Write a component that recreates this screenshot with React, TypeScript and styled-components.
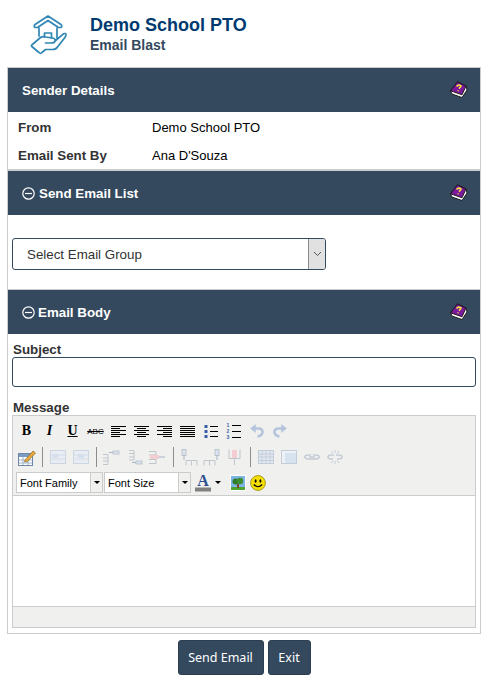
import React from "react"
import styled, { createGlobalStyle } from "styled-components"

const dark = "#34495e"
const line = "#cccccc"

const GlobalStyle = createGlobalStyle`
    html, body {
        margin: 0;
        padding: 0;
        background: #fff;
        font-family: "Liberation Sans", Arial, sans-serif;
    }
`

const Page = styled.div`
    width: 488px;
    height: 689px;
    overflow: hidden;
`

const Brand = styled.header`
    height: 67px;
    display: flex;
    align-items: flex-start;
    padding-left: 30px;
`

const LogoSvg = styled.svg`
    width: 37px;
    height: 42px;
    margin-top: 14px;
    flex: none;
`

const BrandText = styled.div`
    margin-left: 23px;
    padding-top: 15px;
`

const BrandTitle = styled.h1`
    margin: 0;
    font-size: 18px;
    line-height: 20px;
    font-weight: 700;
    color: #003a70;
`

const BrandSub = styled.h2`
    margin: 0;
    font-size: 14px;
    line-height: 20px;
    font-weight: 700;
    color: #34495e;
`

const Frame = styled.main`
    margin-left: 7px;
    width: 474px;
    height: 567px;
    box-sizing: border-box;
    border: 1px solid ${line};
`

const PanelBar = styled.div`
    height: 44px;
    box-sizing: border-box;
    background: ${dark};
    color: #fff;
    display: flex;
    align-items: center;
    padding: 0 12px 0 14px;
    font-size: 13.33px;
    font-weight: 700;
`

const BarTitle = styled.span`
    flex: 1;
    margin-left: ${p => p.$gap ?? 0}px;
`

const Details = styled.div`
    height: 57px;
    padding: 1px 0 0 10px;
    box-sizing: border-box;
`

const DetailRow = styled.div`
    display: flex;
    height: 28px;
    align-items: center;
    font-size: 13px;
    color: #000;
`

const DetailLabel = styled.span`
    width: 134px;
    font-size: 13.33px;
    font-weight: 700;
    color: #333;
`

const Divider = styled.div`
    height: ${p => p.$h ?? 2}px;
    background: ${line};
`

const ListBody = styled.div`
    height: 74px;
    box-sizing: border-box;
    padding: 23px 0 0 4px;
`

const SelectBox = styled.div`
    width: 314px;
    height: 32px;
    box-sizing: border-box;
    border: 1px solid ${dark};
    border-radius: 3px;
    display: flex;
    align-items: center;
    font-size: 13.33px;
    color: #333;
    padding-left: 14px;
    overflow: hidden;
`

const SelectText = styled.span`
    flex: 1;
`

const SelectArrow = styled.span`
    width: 17px;
    height: 30px;
    box-sizing: border-box;
    background: #e1e1e1;
    border-left: 1px solid #8a8a8a;
    display: flex;
    align-items: center;
    justify-content: center;
`

const BodyArea = styled.div`
    padding: 8px 4px 0;
`

const FieldLabel = styled.label`
    display: block;
    font-size: 13.33px;
    line-height: 15px;
    font-weight: 700;
    color: #333;
    padding-left: 1px;
    margin-top: ${p => p.$top ?? 0}px;
`

const TextInput = styled.div`
    height: 30px;
    box-sizing: border-box;
    border: 1px solid ${dark};
    border-radius: 3px;
`

const Editor = styled.div`
    height: 213px;
    box-sizing: border-box;
    border: 1px solid ${line};
    display: flex;
    flex-direction: column;
`

const Toolbar = styled.div`
    height: 80px;
    box-sizing: border-box;
    background: #f0f0ee;
    border-bottom: 1px solid ${line};
    padding: 2px 0 0 2px;
`

const ToolRow = styled.div`
    height: ${p => p.$h ?? 26}px;
    display: flex;
    align-items: center;
`

const ToolButton = styled.span`
    width: ${p => p.$w ?? 23}px;
    height: 20px;
    flex: none;
    display: flex;
    align-items: center;
    justify-content: center;
    font-family: "Liberation Serif", serif;
    font-weight: 700;
    font-size: 14px;
    font-style: ${p => (p.$italic ? "italic" : "normal")};
    text-decoration: ${p => (p.$under ? "underline" : "none")};
    color: #000;
`

const StrikeText = styled.span`
    font-size: 8px;
    font-family: "Liberation Sans", sans-serif;
    font-weight: 400;
    text-decoration: line-through;
`

const ToolSep = styled.span`
    width: 8px;
    height: 20px;
    flex: none;
    display: flex;
    justify-content: center;
    &::before {
        content: "";
        width: 1px;
        background: #8c8c8c;
    }
`

const ListBoxWrap = styled.span`
    width: ${p => p.$w}px;
    height: 21px;
    margin-left: ${p => p.$left ?? 0}px;
    flex: none;
    box-sizing: border-box;
    border: 1px solid ${line};
    background: #fff;
    display: flex;
    align-items: center;
    font-size: 11px;
    color: #000;
    padding-left: 3px;
`

const ListBoxText = styled.span`
    flex: 1;
`

const ListBoxArrow = styled.span`
    width: 11px;
    height: 19px;
    background: #f0f0ee;
    border-left: 1px solid ${line};
    display: flex;
    align-items: center;
    justify-content: center;
`

const Caret = styled.span`
    width: 0;
    height: 0;
    border-left: 3px solid transparent;
    border-right: 3px solid transparent;
    border-top: 3px solid #000;
`

const ColorGroup = styled.span`
    display: flex;
    align-items: center;
    width: 37px;
    gap: 4px;
    padding-left: 4px;
    box-sizing: border-box;
`

const EditArea = styled.div`
    flex: 1;
    background: #fff;
`

const StatusBar = styled.div`
    height: 21px;
    box-sizing: border-box;
    background: #f0f0ee;
    border-top: 1px solid ${line};
`

const Actions = styled.div`
    display: flex;
    justify-content: center;
    gap: 4px;
    margin-top: 6px;
`

const ActionButton = styled.button`
    height: 35px;
    width: ${p => p.$w}px;
    padding: 0;
    border: 1px solid #2c3e50;
    border-radius: 3px;
    background: ${dark};
    color: #fff;
    font-family: "Noto Sans", Tahoma, sans-serif;
    font-size: 12.5px;
`

const Logo = () => (
    <LogoSvg viewBox="0 0 37 42" fill="none" stroke="#2f86b4" strokeWidth="1.7" strokeLinejoin="round" strokeLinecap="round">
        <path d="M18 2 L5 10.5 Q3.5 12 5 13.5 L7.5 13.5 L18 6.5 L28.5 13.5 L31 13.5 Q32.5 12 31 10.5 Z" />
        <path d="M9 14 V22 M27 14 V24" />
        <path d="M14.5 23 V19 H21.5 V24" />
        <path d="M25 27 L33.5 19.8 Q36 18.8 36 21 Q36 22 34.5 24 L27.5 33 Q26 35.5 22.5 35.5 H15.5 L12 38.5 Q10.5 40 9 38.5 L1.8 32.5 Q1 31.8 1.8 31 L10.5 23.5 Q12.5 22 15.5 23 L22.5 24 Q25.5 24.5 25 27 Q24.5 29 21.5 29 H15.5" />
    </LogoSvg>
)

const HelpBook = () => (
    <svg width="18" height="18" viewBox="0 0 18 18">
        <path d="M0.5 10 L2 13 L12 16.5 L17 9 L16 5 Z" fill="#ffffff" stroke="#111" strokeWidth="0.9" />
        <path d="M7.5 0.8 L0.5 9.8 L12 13.8 L16 5 Z" fill="#7a1a9a" stroke="#111" strokeWidth="0.9" />
        <path d="M6.5 5.5 Q8.5 3.2 11 5 Q10.5 6.8 8.8 7.5 M8.2 9.4 L8 10.2" fill="none" stroke="#f7e33c" strokeWidth="1.6" />
    </svg>
)

const MinusCircle = () => (
    <svg width="13" height="13" viewBox="0 0 13 13" fill="none" stroke="#fff" strokeWidth="1.2">
        <circle cx="6.5" cy="6.5" r="5.7" />
        <path d="M3 6.5 H10" />
    </svg>
)

const AlignLines = ({ side }: { side: "left" | "right" | "center" | "full" }) => (
    <svg width="15" height="12" viewBox="0 0 15 12" stroke="#000">
        {[15, 9, 15, 9, 15, 9].map((w, i) => {
            const width = side === "full" ? 15 : w
            const x = side === "right" ? 15 - width : side === "center" ? (15 - width) / 2 : 0
            return <path key={i} d={`M${x} ${i * 2 + 1.5} h${width}`} />
        })}
    </svg>
)

const BulletList = () => (
    <svg width="14" height="14" viewBox="0 0 14 14">
        {[2, 7, 12].map(y => (
            <g key={y}>
                <rect x="0.5" y={y - 1} width="3" height="3" fill="#3a5fa8" />
                <path d={`M6 ${y + 0.5} h8`} stroke="#000" />
            </g>
        ))}
    </svg>
)

const NumList = () => (
    <svg width="15" height="17" viewBox="0 0 15 17">
        {[2, 8, 14].map((y, i) => (
            <g key={y}>
                <text x="0.5" y={y + 2} fontSize="5" fontWeight="700" fill="#3a5fa8" fontFamily="Liberation Sans">{i + 1}</text>
                <path d={`M6 ${y + 0.5} h9`} stroke="#000" />
            </g>
        ))}
    </svg>
)

const Undo = ({ flip }: { flip?: boolean }) => (
    <svg width="14" height="14" viewBox="0 0 14 14" fill="none" stroke="#b3c4dc" strokeWidth="2.6" style={flip ? { transform: "scaleX(-1)" } : undefined}>
        <path d="M4 4.5 H8.5 Q12.5 4.5 12.5 8 Q12.5 11.5 7.5 12.5" />
        <path d="M0.5 4.5 L5.5 0.5 V8.5 Z" fill="#b3c4dc" strokeWidth="0.5" />
    </svg>
)

const TableEdit = () => (
    <svg width="18" height="17" viewBox="0 0 18 17">
        <rect x="0.5" y="4.5" width="14" height="12" fill="#fff" stroke="#6d87aa" />
        <rect x="1" y="5" width="13" height="3" fill="#7c9cc4" />
        <path d="M5 8 V16 M10 8 V16 M1 11 H14 M1 14 H14" stroke="#9fb3cc" />
        <path d="M7 11 L15 2 L17.5 4 L9.5 12.5 L6.5 13 Z" fill="#e8a83a" stroke="#7a5a20" strokeWidth="0.6" />
    </svg>
)

const RowProps = ({ right }: { right?: boolean }) => (
    <svg width="16" height="14" viewBox="0 0 16 14">
        <rect x="0.5" y="0.5" width="15" height="13" fill="#e9edf3" stroke="#ccd6e2" />
        <rect x={right ? 5 : 2} y="4" width="6" height="4" fill="#d5e0ee" />
        <path d="M1 5 H15 M1 9 H15" stroke="#d6dee8" />
    </svg>
)

const Split = ({ kind }: { kind: number }) => (
    <svg width="18" height="15" viewBox="0 0 18 15" fill="none" stroke="#c0c6cd">
        <path d={kind === 0 ? "M0 4.5 H5 V14.5 H0 M0 8 H5 M0 11 H5" : kind === 1 ? "M3 0.5 H8 V10 H3 M3 3.5 H8 M3 7 H8" : "M0 1.5 H7 V13.5 H0 M0 5 H7 M0 9.5 H7"} />
        {kind === 0 && <><rect x="10" y="1" width="6" height="3" fill="#d8e2f0" /><path d="M6 2.5 H10" stroke="#a5b4c6" /></>}
        {kind === 1 && <><rect x="10" y="11" width="6" height="3" fill="#d8e2f0" /><path d="M6 12.5 H10" stroke="#a5b4c6" /></>}
        {kind === 2 && <><rect x="1" y="5" width="9" height="4" fill="#f3cdd2" stroke="none" /><path d="M10 7 H16" stroke="#a5b4c6" /></>}
    </svg>
)

const ColSplit = ({ kind }: { kind: number }) => (
    <svg width="18" height="17" viewBox="0 0 18 17" fill="none" stroke="#c0c6cd">
        {kind === 0 && <><rect x="2" y="0.5" width="4" height="6" fill="#d8e2f0" /><path d="M4 6 V11" stroke="#a5b4c6" /><path d="M6 16.5 V11.5 H17 V16.5 M11.5 11.5 V16.5" /></>}
        {kind === 1 && <><rect x="12" y="0.5" width="4" height="6" fill="#d8e2f0" /><path d="M14 6 V11" stroke="#a5b4c6" /><path d="M1 16.5 V11.5 H12 V16.5 M6.5 11.5 V16.5" /></>}
        {kind === 2 && <><rect x="6" y="1" width="5" height="8" fill="#f3cdd2" stroke="none" /><path d="M3 0.5 V9.5 H14 V0.5 M8.5 9 V16" /></>}
    </svg>
)

const GridIcon = () => (
    <svg width="16" height="14" viewBox="0 0 16 14" fill="#e4e9f0" stroke="#c2ccda">
        <rect x="0.5" y="0.5" width="15" height="13" />
        <path d="M0.5 4 H15.5 M0.5 7 H15.5 M0.5 10.5 H15.5 M4 0.5 V13.5 M8 0.5 V13.5 M12 0.5 V13.5" fill="none" />
    </svg>
)

const CellIcon = () => (
    <svg width="16" height="14" viewBox="0 0 16 14" stroke="#c2ccda">
        <rect x="0.5" y="0.5" width="15" height="13" fill="#eef2f7" />
        <rect x="4" y="3" width="11" height="10" fill="#d8e3f0" stroke="none" />
    </svg>
)

const LinkIcon = ({ broken }: { broken?: boolean }) => (
    <svg width="16" height="16" viewBox="0 0 16 16" fill="none" stroke="#c4ccd6" strokeWidth="1.6">
        {broken ? (
            <>
                <path d="M7 6 H4 Q1 6 1 8 Q1 10 4 10 H6 M9 6 H12 Q15 6 15 8 Q15 10 12 10 H10" />
                <path d="M8 1 V4 M8 12 V15 M4 2 L6 4.5 M12 2 L10 4.5 M4 14 L6 11.5 M12 14 L10 11.5" strokeWidth="1" />
            </>
        ) : (
            <path d="M7 6 H4 Q1 6 1 8 Q1 10 4 10 H8 M9 6 H12 Q15 6 15 8 Q15 10 12 10 H8 M5 8 H11" />
        )}
    </svg>
)

const ColorA = () => (
    <svg width="16" height="19" viewBox="0 0 16 19">
        <text x="8" y="13" textAnchor="middle" fontSize="16" fontWeight="700" fontFamily="Liberation Serif" fill="#2d4f8e">A</text>
        <rect x="0" y="14.5" width="16" height="4" fill="#808080" />
    </svg>
)

const PictureIcon = () => (
    <svg width="16" height="16" viewBox="0 0 16 16">
        <rect x="0.5" y="0.5" width="15" height="15" fill="#7fb4e6" stroke="#fff" />
        <rect x="1" y="12" width="14" height="3" fill="#4da52f" />
        <rect x="7" y="9" width="2" height="4" fill="#7a4a1e" />
        <circle cx="5.5" cy="6.5" r="3" fill="#2f7d2a" />
        <circle cx="10" cy="6" r="3.2" fill="#3a8f30" />
    </svg>
)

const Smiley = () => (
    <svg width="16" height="16" viewBox="0 0 16 16">
        <circle cx="8" cy="8" r="7.4" fill="#f6e000" stroke="#a89a20" />
        <ellipse cx="5.6" cy="6" rx="1" ry="1.7" fill="#000" />
        <ellipse cx="10.4" cy="6" rx="1" ry="1.7" fill="#000" />
        <path d="M3.8 9.5 Q8 14 12.2 9.5" fill="none" stroke="#000" strokeWidth="1.1" />
    </svg>
)

const App = () => {
    return (
        <Page>
            <GlobalStyle />
            <Brand>
                <Logo />
                <BrandText>
                    <BrandTitle>Demo School PTO</BrandTitle>
                    <BrandSub>Email Blast</BrandSub>
                </BrandText>
            </Brand>
            <Frame>
                <PanelBar>
                    <BarTitle>Sender Details</BarTitle>
                    <HelpBook />
                </PanelBar>
                <Details>
                    <DetailRow>
                        <DetailLabel>From</DetailLabel>Demo School PTO
                    </DetailRow>
                    <DetailRow>
                        <DetailLabel>Email Sent By</DetailLabel>Ana D'Souza
                    </DetailRow>
                </Details>
                <Divider />
                <PanelBar>
                    <MinusCircle />
                    <BarTitle $gap={4}>Send Email List</BarTitle>
                    <HelpBook />
                </PanelBar>
                <ListBody>
                    <SelectBox>
                        <SelectText>Select Email Group</SelectText>
                        <SelectArrow>
                            <svg width="9" height="6" viewBox="0 0 9 6" fill="none" stroke="#555">
                                <path d="M1 1 L4.5 4.5 L8 1" />
                            </svg>
                        </SelectArrow>
                    </SelectBox>
                </ListBody>
                <Divider $h={1} />
                <PanelBar>
                    <MinusCircle />
                    <BarTitle $gap={3}>Email Body</BarTitle>
                    <HelpBook />
                </PanelBar>
                <BodyArea>
                    <FieldLabel>Subject</FieldLabel>
                    <TextInput />
                    <FieldLabel $top={13}>Message</FieldLabel>
                    <Editor>
                        <Toolbar>
                            <ToolRow>
                                <ToolButton>B</ToolButton>
                                <ToolButton $italic>I</ToolButton>
                                <ToolButton $under>U</ToolButton>
                                <ToolButton><StrikeText>ABC</StrikeText></ToolButton>
                                <ToolButton><AlignLines side="left" /></ToolButton>
                                <ToolButton><AlignLines side="center" /></ToolButton>
                                <ToolButton><AlignLines side="right" /></ToolButton>
                                <ToolButton><AlignLines side="full" /></ToolButton>
                                <ToolButton><BulletList /></ToolButton>
                                <ToolButton><NumList /></ToolButton>
                                <ToolButton><Undo /></ToolButton>
                                <ToolButton><Undo flip /></ToolButton>
                            </ToolRow>
                            <ToolRow>
                                <ToolButton><TableEdit /></ToolButton>
                                <ToolSep />
                                <ToolButton><RowProps /></ToolButton>
                                <ToolButton><RowProps right /></ToolButton>
                                <ToolSep />
                                <ToolButton><Split kind={0} /></ToolButton>
                                <ToolButton><Split kind={1} /></ToolButton>
                                <ToolButton><Split kind={2} /></ToolButton>
                                <ToolSep />
                                <ToolButton><ColSplit kind={0} /></ToolButton>
                                <ToolButton><ColSplit kind={1} /></ToolButton>
                                <ToolButton><ColSplit kind={2} /></ToolButton>
                                <ToolSep />
                                <ToolButton><GridIcon /></ToolButton>
                                <ToolButton><CellIcon /></ToolButton>
                                <ToolButton><LinkIcon /></ToolButton>
                                <ToolButton><LinkIcon broken /></ToolButton>
                            </ToolRow>
                            <ToolRow $h={25}>
                                <ListBoxWrap $w={87} $left={1}>
                                    <ListBoxText>Font Family</ListBoxText>
                                    <ListBoxArrow><Caret /></ListBoxArrow>
                                </ListBoxWrap>
                                <ListBoxWrap $w={87} $left={1}>
                                    <ListBoxText>Font Size</ListBoxText>
                                    <ListBoxArrow><Caret /></ListBoxArrow>
                                </ListBoxWrap>
                                <ColorGroup>
                                    <ColorA />
                                    <Caret />
                                </ColorGroup>
                                <ToolButton $w={20}><PictureIcon /></ToolButton>
                                <ToolButton $w={20}><Smiley /></ToolButton>
                            </ToolRow>
                        </Toolbar>
                        <EditArea />
                        <StatusBar />
                    </Editor>
                </BodyArea>
            </Frame>
            <Actions>
                <ActionButton $w={86}>Send Email</ActionButton>
                <ActionButton $w={43}>Exit</ActionButton>
            </Actions>
        </Page>
    )
}

export default App
